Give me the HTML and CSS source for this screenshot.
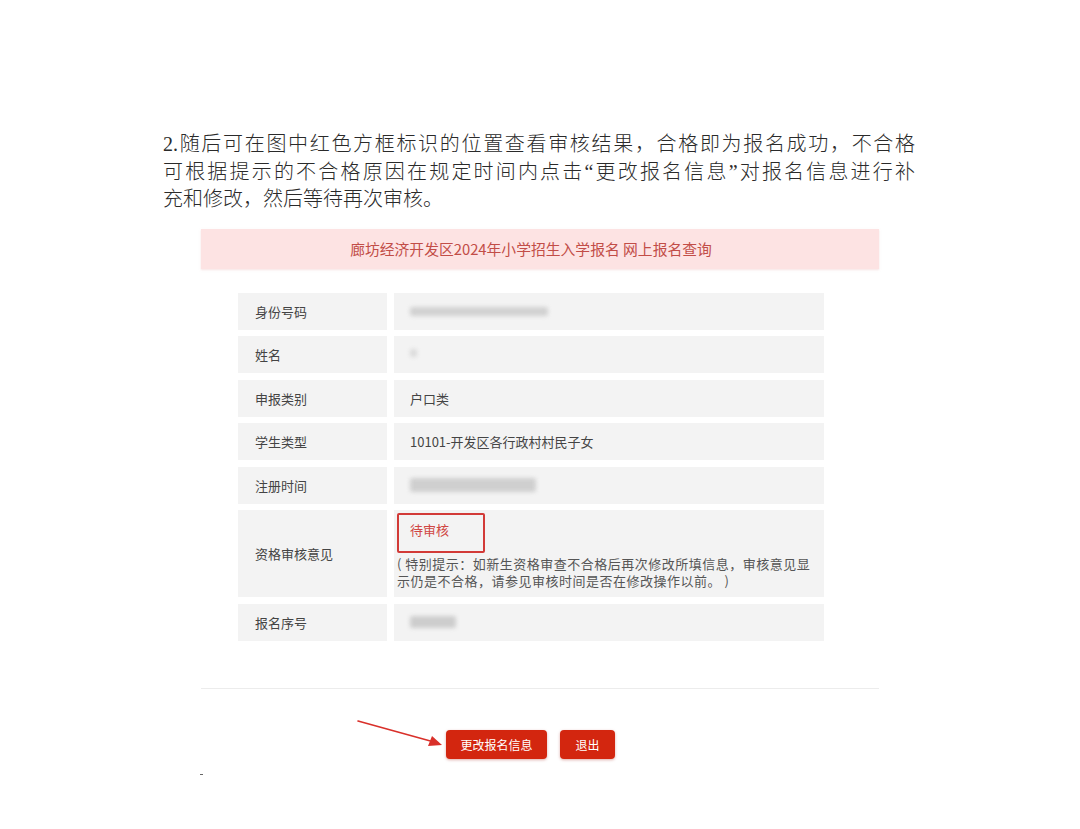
FILE: index.html
```html
<!DOCTYPE html>
<html lang="zh-CN">

<head>
  <meta charset="UTF-8" />
  <meta name="viewport" content="width=device-width, initial-scale=1.0" />
  <title>网上报名查询</title>
  <link rel="stylesheet" href="styles.css">
</head>

<body>
  <main class="page">
    <div class="intro">
      <p class="intro-line">2.随后可在图中红色方框标识的位置查看审核结果，合格即为报名成功，不合格</p>
      <p class="intro-line">可根据提示的不合格原因在规定时间内点击“更改报名信息”对报名信息进行补</p>
      <p class="intro-line last">充和修改，然后等待再次审核。</p>
    </div>

    <div class="banner">廊坊经济开发区2024年小学招生入学报名 网上报名查询</div>

    <div class="info-table">
      <div class="row">
        <div class="cell label">身份号码</div>
        <div class="cell value"><span class="blur blur-id"></span></div>
      </div>
      <div class="row">
        <div class="cell label">姓名</div>
        <div class="cell value"><span class="blur blur-name"></span></div>
      </div>
      <div class="row">
        <div class="cell label">申报类别</div>
        <div class="cell value">户口类</div>
      </div>
      <div class="row">
        <div class="cell label">学生类型</div>
        <div class="cell value">10101-开发区各行政村村民子女</div>
      </div>
      <div class="row">
        <div class="cell label">注册时间</div>
        <div class="cell value"><span class="blur blur-time"></span></div>
      </div>
      <div class="row tall">
        <div class="cell label">资格审核意见</div>
        <div class="cell value status-cell">
          <div class="status-box">待审核</div>
          <p class="note">( 特别提示：如新生资格审查不合格后再次修改所填信息，审核意见显<br>示仍是不合格，请参见审核时间是否在修改操作以前。 )</p>
        </div>
      </div>
      <div class="row">
        <div class="cell label">报名序号</div>
        <div class="cell value"><span class="blur blur-no"></span></div>
      </div>
    </div>

    <div class="divider"></div>

    <div class="actions">
      <svg class="arrow" width="90" height="30" viewBox="0 0 90 30">
        <line x1="2" y1="2" x2="78" y2="23" stroke="#d9302a" stroke-width="1.6" stroke-linecap="round" />
        <polygon points="86,26 72,27 76,17" fill="#d9302a" />
      </svg>
      <button class="btn">更改报名信息</button>
      <button class="btn btn-small">退出</button>
    </div>
    <span class="dot"></span>
  </main>
</body>

</html>
```

FILE: styles.css
```css
* {
  padding: 0;
  margin: 0;
  box-sizing: border-box;
}

body {
  background: #fff;
  font-family: "Noto Sans CJK SC", "Noto Sans", sans-serif;
}

.page {
  width: 1080px;
  height: 829px;
  padding-top: 131px;
  position: relative;
}

.intro {
  margin-left: 163px;
  width: 752px;
  font-family: "Liberation Serif", "Noto Sans CJK SC", serif;
  font-size: 20px;
  font-weight: 300;
  line-height: 27.5px;
  color: #2a2a2a;
}

.intro-line {
  text-align: justify;
  text-align-last: justify;
  white-space: nowrap;
}

.intro-line.last {
  text-align-last: left;
}

.banner {
  margin: 15px 0 0 201px;
  width: 678px;
  height: 40px;
  padding-right: 18px;
  background: #fde3e3;
  color: #c24d47;
  font-size: 14.8px;
  line-height: 40px;
  text-align: center;
  box-shadow: 0 1px 2px rgba(240, 200, 200, 0.5);
}

.info-table {
  margin: 24px 0 0 238px;
  width: 586px;
  display: flex;
  flex-direction: column;
  gap: 6.5px;
}

.row {
  display: flex;
  gap: 7px;
  height: 37px;
}

.row.tall {
  height: 87px;
}

.cell {
  background: #f3f3f3;
  font-size: 13px;
  color: #444;
  display: flex;
  align-items: center;
}

.label {
  width: 149px;
  padding-left: 17px;
}

.value {
  flex: 1;
  padding-left: 16px;
}

.blur {
  display: inline-block;
  background: #c9c9c9;
  filter: blur(2px);
  border-radius: 2px;
}

.blur-id {
  width: 138px;
  height: 9px;
  opacity: 0.8;
}

.blur-name {
  width: 7px;
  height: 8px;
  margin-top: -4px;
  opacity: 0.6;
}

.blur-time {
  width: 126px;
  height: 14px;
  opacity: 0.85;
}

.blur-no {
  width: 46px;
  height: 12px;
  opacity: 0.9;
}

.status-cell {
  flex-direction: column;
  align-items: flex-start;
  justify-content: flex-start;
  padding: 2.5px 0 0 3px;
}

.status-box {
  width: 88px;
  height: 40px;
  border: 2px solid #d23a37;
  border-radius: 2px;
  color: #d04743;
  padding: 7px 0 0 11px;
  font-size: 13px;
  line-height: 16px;
}

.note {
  margin-top: 2px;
  font-size: 13px;
  letter-spacing: 0.5px;
  line-height: 17px;
  color: #555;
  white-space: nowrap;
}

.divider {
  margin: 47px 0 0 201px;
  width: 678px;
  height: 1px;
  background: #ececec;
}

.actions {
  margin: 41px 0 0 446px;
  display: flex;
  gap: 13px;
  position: relative;
}

.arrow {
  position: absolute;
  left: -90px;
  top: -11px;
}

.btn {
  height: 29px;
  width: 101px;
  border: none;
  border-radius: 4px;
  background: #d3260f;
  color: #fff;
  font-family: "Noto Sans CJK SC", sans-serif;
  font-size: 12px;
  box-shadow: 0 1px 3px rgba(160, 20, 10, 0.35);
}

.btn-small {
  width: 55px;
}

.dot {
  position: absolute;
  left: 200px;
  top: 774px;
  width: 3px;
  height: 1px;
  background: #666;
}
```
